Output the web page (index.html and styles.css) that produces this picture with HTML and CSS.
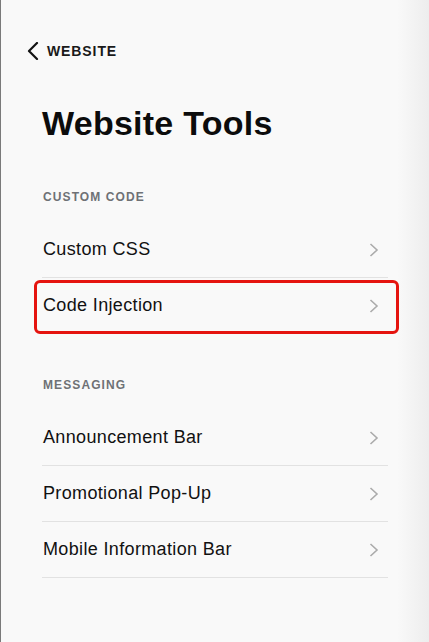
FILE: index.html
```html
<!DOCTYPE html>
<html lang="en">
<head>
<meta charset="utf-8">
<title>Website Tools</title>
<link rel="stylesheet" href="styles.css">
</head>
<body>
<div class="panel">
  <div class="back">
    <svg class="back-icon" width="12" height="18" viewBox="0 0 12 18" aria-hidden="true"><path d="M10 1 L2 9 L10 17" fill="none" stroke="#111" stroke-width="2.2" stroke-linecap="round" stroke-linejoin="round"/></svg>
    <span class="back-label">WEBSITE</span>
  </div>
  <h1 class="title">Website Tools</h1>

  <section class="group">
    <h2 class="group-label">CUSTOM CODE</h2>
    <ul class="list">
      <li class="row"><span>Custom CSS</span><svg class="chev" width="10" height="14" viewBox="0 0 10 14" aria-hidden="true"><path d="M1.5 1 L8 7 L1.5 13" fill="none" stroke="#ababab" stroke-width="1.6"/></svg></li>
      <li class="row row-highlight"><span>Code Injection</span><svg class="chev" width="10" height="14" viewBox="0 0 10 14" aria-hidden="true"><path d="M1.5 1 L8 7 L1.5 13" fill="none" stroke="#ababab" stroke-width="1.6"/></svg></li>
    </ul>
  </section>

  <section class="group group-second">
    <h2 class="group-label">MESSAGING</h2>
    <ul class="list">
      <li class="row"><span>Announcement Bar</span><svg class="chev" width="10" height="14" viewBox="0 0 10 14" aria-hidden="true"><path d="M1.5 1 L8 7 L1.5 13" fill="none" stroke="#ababab" stroke-width="1.6"/></svg></li>
      <li class="row"><span>Promotional Pop-Up</span><svg class="chev" width="10" height="14" viewBox="0 0 10 14" aria-hidden="true"><path d="M1.5 1 L8 7 L1.5 13" fill="none" stroke="#ababab" stroke-width="1.6"/></svg></li>
      <li class="row"><span>Mobile Information Bar</span><svg class="chev" width="10" height="14" viewBox="0 0 10 14" aria-hidden="true"><path d="M1.5 1 L8 7 L1.5 13" fill="none" stroke="#ababab" stroke-width="1.6"/></svg></li>
    </ul>
  </section>
</div>
</body>
</html>
```
FILE: styles.css
```css
html, body {
  margin: 0;
  padding: 0;
  height: 100%;
}
body {
  background: linear-gradient(to right, #f9f9f9 0, #f9f9f9 calc(100% - 32px), #ededed 100%);
  border-left: 1px solid #7a7a7a;
  font-family: "Liberation Sans", Arial, sans-serif;
  color: #111;
  box-sizing: border-box;
}
.panel {
  padding: 41px 41px 0 41px;
}
.back {
  display: flex;
  align-items: center;
  height: 20px;
  gap: 8px;
  margin-left: -15px;
}
.back-icon {
  display: block;
}
.back-label {
  font-size: 14px;
  font-weight: 700;
  letter-spacing: 0.9px;
  line-height: 20px;
  color: #1a1a1a;
}
.title {
  margin: 42px 0 0 0;
  font-size: 34px;
  line-height: 40px;
  font-weight: 700;
  color: #0c0c0c;
  letter-spacing: 0.25px;
}
.group-label {
  margin: 46px 0 17px 1px;
  font-size: 12px;
  line-height: 16px;
  font-weight: 700;
  letter-spacing: 1.1px;
  color: #6e7175;
}
.group-second .group-label {
  margin-top: 43px;
}
.list {
  list-style: none;
  margin: 0;
  padding: 0;
}
.row {
  position: relative;
  display: flex;
  align-items: center;
  justify-content: space-between;
  height: 55px;
  border-bottom: 1px solid #e2e2e2;
  font-size: 18px;
  letter-spacing: 0.35px;
  padding-left: 1px;
  padding-right: 9px;
}
.chev {
  display: block;
}
.row-highlight::after {
  content: "";
  position: absolute;
  left: -8px;
  right: -11px;
  top: 2px;
  bottom: -1px;
  border: 3px solid #e5140f;
  border-radius: 6px;
}
```
